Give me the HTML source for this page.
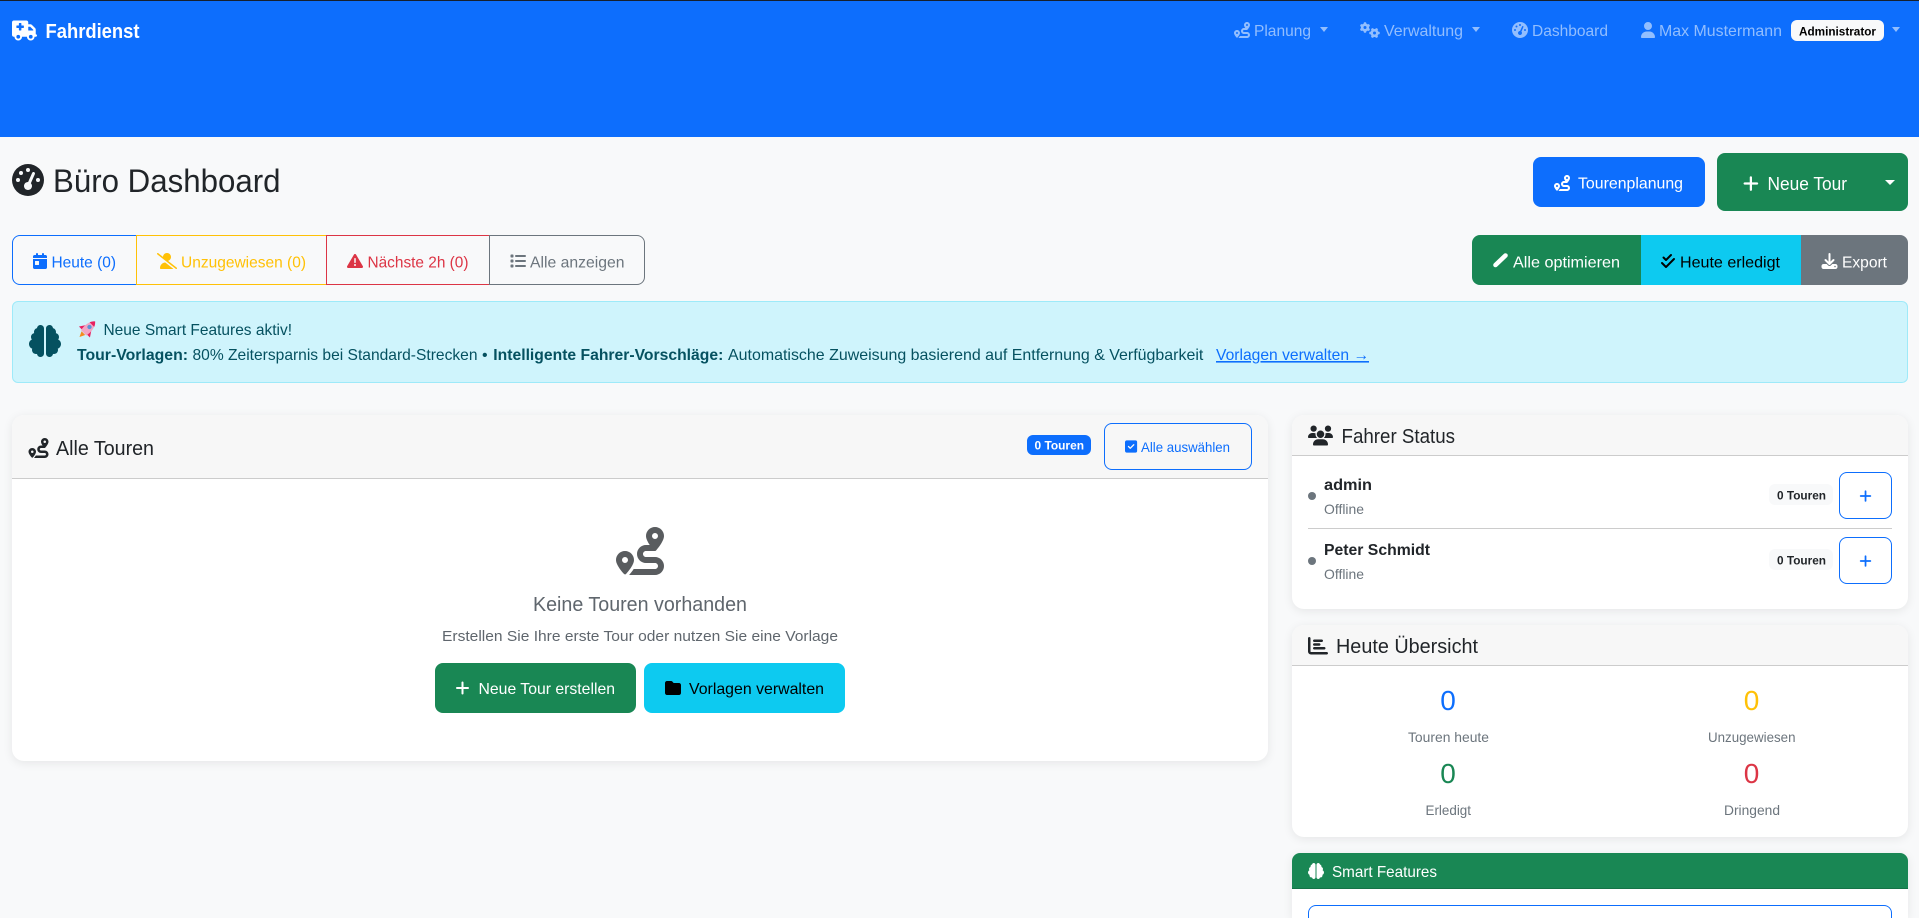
<!DOCTYPE html>
<html lang="de">
<head>
<meta charset="utf-8">
<title>Fahrdienst - Büro Dashboard</title>
<style>
html,body{margin:0;padding:0;width:1919px;height:918px;overflow:hidden;background:#f8f9fa;font-family:"Liberation Sans",sans-serif}
body{position:relative}
.b{position:absolute;box-sizing:border-box}
.card{background:#fff;border-radius:12px;box-shadow:0 2px 10px rgba(0,0,0,.08);overflow:hidden}
.hd{position:absolute;left:0;right:0;top:0;background:#f7f7f7;border-bottom:1px solid #ccc;box-sizing:border-box}
svg.o{position:absolute;left:0;top:0}
svg.o text{font-family:"Liberation Sans",sans-serif;font-size:16px}
.bd{font-weight:700}
</style>
</head>
<body>
<nav class="b" style="left:0;top:0;width:1919px;height:137px;background:#0d6efd;border-top:1px solid #16202e"></nav>

<!-- top buttons -->
<div class="b" style="left:1533px;top:157px;width:172px;height:50px;background:#0d6efd;border-radius:8px"></div>
<div class="b" style="left:1717px;top:153px;width:191px;height:58px;background:#198754;border-radius:8px"></div>

<!-- filter group -->
<div class="b" style="left:12px;top:235px;width:125px;height:50px;border:1px solid #0d6efd;border-radius:8px 0 0 8px"></div>
<div class="b" style="left:136px;top:235px;width:191px;height:50px;border:1px solid #ffc107"></div>
<div class="b" style="left:326px;top:235px;width:164px;height:50px;border:1px solid #dc3545"></div>
<div class="b" style="left:489px;top:235px;width:156px;height:50px;border:1px solid #6c757d;border-radius:0 8px 8px 0"></div>

<!-- action group -->
<div class="b" style="left:1472px;top:235px;width:169px;height:50px;background:#198754;border-radius:8px 0 0 8px"></div>
<div class="b" style="left:1641px;top:235px;width:160px;height:50px;background:#0dcaf0"></div>
<div class="b" style="left:1801px;top:235px;width:107px;height:50px;background:#6c757d;border-radius:0 8px 8px 0"></div>

<!-- alert -->
<div class="b" style="left:12px;top:301px;width:1896px;height:82px;background:#cff4fc;border:1px solid #9eeaf9;border-radius:6px"></div>

<!-- tours card -->
<div class="b card" style="left:12px;top:415px;width:1256px;height:346px">
  <div class="hd" style="height:64px"></div>
</div>
<div class="b" style="left:1027px;top:435px;width:64px;height:20px;background:#0d6efd;border-radius:6px"></div>
<div class="b" style="left:1104px;top:423px;width:148px;height:47px;border:1px solid #0d6efd;border-radius:8px"></div>
<div class="b" style="left:435px;top:663px;width:201px;height:50px;background:#198754;border-radius:8px"></div>
<div class="b" style="left:644px;top:663px;width:201px;height:50px;background:#0dcaf0;border-radius:8px"></div>

<!-- driver card -->
<div class="b card" style="left:1292px;top:415px;width:616px;height:194px">
  <div class="hd" style="height:41px"></div>
</div>
<div class="b" style="left:1308px;top:492px;width:8px;height:8px;border-radius:50%;background:#6c757d"></div>
<div class="b" style="left:1308px;top:557px;width:8px;height:8px;border-radius:50%;background:#6c757d"></div>
<div class="b" style="left:1769px;top:484px;width:64px;height:21px;background:#f8f9fa;border-radius:6px"></div>
<div class="b" style="left:1769px;top:549px;width:64px;height:21px;background:#f8f9fa;border-radius:6px"></div>
<div class="b" style="left:1839px;top:472px;width:53px;height:47px;border:1px solid #0d6efd;border-radius:8px"></div>
<div class="b" style="left:1839px;top:537px;width:53px;height:47px;border:1px solid #0d6efd;border-radius:8px"></div>
<div class="b" style="left:1308px;top:528px;width:584px;height:1px;background:#ccc"></div>

<!-- today card -->
<div class="b card" style="left:1292px;top:625px;width:616px;height:212px">
  <div class="hd" style="height:41px"></div>
</div>

<!-- smart card -->
<div class="b card" style="left:1292px;top:853px;width:616px;height:65px;border-radius:8px 8px 0 0">
  <div class="hd" style="height:36px;background:#198754;border-bottom:1px solid #157347"></div>
</div>
<div class="b" style="left:1308px;top:905px;width:584px;height:13px;border:1px solid #0d6efd;border-bottom:0;border-radius:8px 8px 0 0"></div>

<svg class="o" width="1919" height="918" viewBox="0 0 1919 918" xmlns="http://www.w3.org/2000/svg">
  <!-- brand -->
  <svg x="12" y="20.5" width="25" height="20" viewBox="0 0 640 512" fill="#fff"><path d="M0 48C0 21.5 21.5 0 48 0H368c26.5 0 48 21.5 48 48V96h50.7c17 0 33.3 6.7 45.3 18.7L589.3 192c12 12 18.7 28.3 18.7 45.3V256v32 64c17.7 0 32 14.3 32 32s-14.3 32-32 32H576c0 53-43 96-96 96s-96-43-96-96H256c0 53-43 96-96 96s-96-43-96-96H48c-26.5 0-48-21.5-48-48V48zM416 256H544V237.3L466.7 160H416v96zM160 464a48 48 0 1 0 0-96 48 48 0 1 0 0 96zm368-48a48 48 0 1 0 -96 0 48 48 0 1 0 96 0zM176 80v48l-48 0c-8.8 0-16 7.2-16 16v32c0 8.8 7.2 16 16 16l48 0v48c0 8.8 7.2 16 16 16h32c8.8 0 16-7.2 16-16V192h48c8.8 0 16-7.2 16-16V144c0-8.8-7.2-16-16-16H240V80c0-8.8-7.2-16-16-16H192c-8.8 0-16 7.2-16 16z"/></svg>
  <text x="45.5" y="38" fill="#fff" class="bd" style="font-size:20px" textLength="94" lengthAdjust="spacingAndGlyphs">Fahrdienst</text>

  <!-- nav -->
  <g fill="#92befe">
    <svg x="1234" y="22" width="16" height="16" viewBox="0 0 512 512"><path d="M512 96c0 50.2-59.1 125.1-84.6 155c-3.8 4.4-9.4 6.1-14.5 5H320c-17.7 0-32 14.3-32 32s14.3 32 32 32h96c53 0 96 43 96 96s-43 96-96 96H139.6c8.7-9.9 19.3-22.6 30-36.8c6.3-8.4 12.8-17.6 19-27.2H416c17.7 0 32-14.3 32-32s-14.3-32-32-32H320c-53 0-96-43-96-96s43-96 96-96h39.8c-21-31.5-39.8-67.7-39.8-96c0-53 43-96 96-96s96 43 96 96zM117.1 489.1c-3.8 4.3-7.2 8.1-10.1 11.3l-1.8 2-.2-.2c-6 4.6-14.6 4-20-1.8C59.8 473 0 402.5 0 352c0-53 43-96 96-96s96 43 96 96c0 30-21.1 67-43.5 97.9c-10.7 14.7-21.7 28-30.8 38.5l-.6 .7zM128 352a32 32 0 1 0 -64 0 32 32 0 1 0 64 0zM416 128a32 32 0 1 0 0-64 32 32 0 1 0 0 64z"/></svg>
    <text x="1254" y="36" fill="#92befe" textLength="57" lengthAdjust="spacingAndGlyphs">Planung</text>
    <polygon points="1320,27 1328,27 1324,32"/>
    <svg x="1360" y="22" width="20" height="16" viewBox="0 0 640 512"><path d="M308.5 135.3c7.1-6.3 9.9-16.2 6.2-25c-2.3-5.3-4.8-10.5-7.6-15.5L304 89.4c-3-5-6.3-9.9-9.8-14.6c-5.7-7.6-15.7-10.1-24.7-7.1l-28.2 9.3c-10.7-8.8-23-16-36.2-20.9L199 27.1c-1.9-9.3-9.1-16.7-18.5-17.8C173.9 8.4 167.2 8 160.4 8h-.7c-6.8 0-13.5 .4-20.1 1.2c-9.4 1.1-16.6 8.6-18.5 17.8L115 56.1c-13.3 5-25.5 12.1-36.2 20.9L50.5 67.8c-9-3-19-.5-24.7 7.1c-3.5 4.7-6.8 9.6-9.9 14.6l-3 5.3c-2.8 5-5.3 10.2-7.6 15.6c-3.7 8.7-.9 18.6 6.2 25l22.2 19.8C32.6 161.9 32 168.9 32 176s.6 14.1 1.7 20.9L11.5 216.7c-7.1 6.3-9.9 16.2-6.2 25c2.3 5.3 4.8 10.5 7.6 15.6l3 5.2c3 5.1 6.3 9.9 9.9 14.6c5.7 7.6 15.7 10.1 24.7 7.1l28.2-9.3c10.7 8.8 23 16 36.2 20.9l6.1 29.1c1.9 9.3 9.1 16.7 18.5 17.8c6.7 .8 13.5 1.2 20.4 1.2s13.7-.4 20.4-1.2c9.4-1.1 16.6-8.6 18.5-17.8l6.1-29.1c13.3-5 25.5-12.1 36.2-20.9l28.2 9.3c9 3 19 .5 24.7-7.1c3.5-4.7 6.8-9.5 9.8-14.6l3.1-5.4c2.8-5 5.3-10.2 7.6-15.5c3.7-8.7 .9-18.6-6.2-25l-22.2-19.8c1.1-6.8 1.7-13.8 1.7-20.9s-.6-14.1-1.7-20.9l22.2-19.8zM112 176a48 48 0 1 1 96 0 48 48 0 1 1 -96 0zM504.7 500.5c6.3 7.1 16.2 9.9 25 6.2c5.3-2.3 10.5-4.8 15.5-7.6l5.4-3.1c5-3 9.9-6.3 14.6-9.8c7.6-5.7 10.1-15.7 7.1-24.7l-9.3-28.2c8.8-10.7 16-23 20.9-36.2l29.1-6.1c9.3-1.9 16.7-9.1 17.8-18.5c.8-6.7 1.2-13.5 1.2-20.4s-.4-13.7-1.2-20.4c-1.1-9.4-8.6-16.6-17.8-18.5L583.9 307c-5-13.3-12.1-25.5-20.9-36.2l9.3-28.2c3-9 .5-19-7.1-24.7c-4.7-3.5-9.6-6.8-14.6-9.9l-5.3-3c-5-2.8-10.2-5.3-15.6-7.6c-8.7-3.7-18.6-.9-25 6.2l-19.8 22.2c-6.8-1.1-13.8-1.7-20.9-1.7s-14.1 .6-20.9 1.7l-19.8-22.2c-6.3-7.1-16.2-9.9-25-6.2c-5.3 2.3-10.5 4.8-15.6 7.6l-5.2 3c-5.1 3-9.9 6.3-14.6 9.9c-7.6 5.7-10.1 15.7-7.1 24.7l9.3 28.2c-8.8 10.7-16 23-20.9 36.2L315.1 313c-9.3 1.9-16.7 9.1-17.8 18.5c-.8 6.7-1.2 13.5-1.2 20.4s.4 13.7 1.2 20.4c1.1 9.4 8.6 16.6 17.8 18.5l29.1 6.1c5 13.3 12.1 25.5 20.9 36.2l-9.3 28.2c-3 9-.5 19 7.1 24.7c4.7 3.5 9.5 6.8 14.6 9.8l5.4 3.1c5 2.8 10.2 5.3 15.5 7.6c8.7 3.7 18.6 .9 25-6.2l19.8-22.2c6.8 1.1 13.8 1.7 20.9 1.7s14.1-.6 20.9-1.7l19.8 22.2zM464 304a48 48 0 1 1 0 96 48 48 0 1 1 0-96z"/></svg>
    <text x="1384" y="36" fill="#92befe" textLength="79" lengthAdjust="spacingAndGlyphs">Verwaltung</text>
    <polygon points="1472,27 1480,27 1476,32"/>
    <svg x="1512" y="22" width="16" height="16" viewBox="0 0 512 512"><path d="M0 256a256 256 0 1 1 512 0A256 256 0 1 1 0 256zM288 96a32 32 0 1 0 -64 0 32 32 0 1 0 64 0zM256 416c35.3 0 64-28.7 64-64c0-17.4-6.9-33.1-18.1-44.6L366 161.7c5.3-12.1-.2-26.3-12.3-31.6s-26.3 .2-31.6 12.3L257.9 288c-.6 0-1.3 0-1.9 0c-35.3 0-64 28.7-64 64s28.7 64 64 64zM176 144a32 32 0 1 0 -64 0 32 32 0 1 0 64 0zM96 288a32 32 0 1 0 0-64 32 32 0 1 0 0 64zm352-32a32 32 0 1 0 -64 0 32 32 0 1 0 64 0z"/></svg>
    <text x="1532" y="36" fill="#92befe" textLength="76" lengthAdjust="spacingAndGlyphs">Dashboard</text>
    <svg x="1641" y="22" width="14" height="16" viewBox="0 0 448 512"><path d="M224 256A128 128 0 1 0 224 0a128 128 0 1 0 0 256zm-45.7 48C79.8 304 0 383.8 0 482.3C0 498.7 13.3 512 29.7 512H418.3c16.4 0 29.7-13.3 29.7-29.7C448 383.8 368.2 304 269.7 304H178.3z"/></svg>
    <text x="1659" y="36" fill="#92befe" textLength="123" lengthAdjust="spacingAndGlyphs">Max Mustermann</text>
    <polygon points="1892,27 1900,27 1896,32"/>
  </g>
  <rect x="1791" y="20" width="93" height="21" rx="6" fill="#f8f9fa"/>
  <text x="1799" y="35.5" fill="#000" class="bd" style="font-size:12px" textLength="77" lengthAdjust="spacingAndGlyphs">Administrator</text>

  <!-- heading -->
  <svg x="12" y="164" width="32" height="32" viewBox="0 0 512 512" fill="#212529"><path d="M0 256a256 256 0 1 1 512 0A256 256 0 1 1 0 256zM288 96a32 32 0 1 0 -64 0 32 32 0 1 0 64 0zM256 416c35.3 0 64-28.7 64-64c0-17.4-6.9-33.1-18.1-44.6L366 161.7c5.3-12.1-.2-26.3-12.3-31.6s-26.3 .2-31.6 12.3L257.9 288c-.6 0-1.3 0-1.9 0c-35.3 0-64 28.7-64 64s28.7 64 64 64zM176 144a32 32 0 1 0 -64 0 32 32 0 1 0 64 0zM96 288a32 32 0 1 0 0-64 32 32 0 1 0 0 64zm352-32a32 32 0 1 0 -64 0 32 32 0 1 0 64 0z"/></svg>
  <text x="53" y="192" fill="#212529" style="font-size:32px" textLength="227.5" lengthAdjust="spacingAndGlyphs">Büro Dashboard</text>

  <!-- top buttons content -->
  <svg x="1554" y="175" width="16" height="16" viewBox="0 0 512 512" fill="#fff"><path d="M512 96c0 50.2-59.1 125.1-84.6 155c-3.8 4.4-9.4 6.1-14.5 5H320c-17.7 0-32 14.3-32 32s14.3 32 32 32h96c53 0 96 43 96 96s-43 96-96 96H139.6c8.7-9.9 19.3-22.6 30-36.8c6.3-8.4 12.8-17.6 19-27.2H416c17.7 0 32-14.3 32-32s-14.3-32-32-32H320c-53 0-96-43-96-96s43-96 96-96h39.8c-21-31.5-39.8-67.7-39.8-96c0-53 43-96 96-96s96 43 96 96zM117.1 489.1c-3.8 4.3-7.2 8.1-10.1 11.3l-1.8 2-.2-.2c-6 4.6-14.6 4-20-1.8C59.8 473 0 402.5 0 352c0-53 43-96 96-96s96 43 96 96c0 30-21.1 67-43.5 97.9c-10.7 14.7-21.7 28-30.8 38.5l-.6 .7zM128 352a32 32 0 1 0 -64 0 32 32 0 1 0 64 0zM416 128a32 32 0 1 0 0-64 32 32 0 1 0 0 64z"/></svg>
  <text x="1578" y="188.5" fill="#fff" textLength="105" lengthAdjust="spacingAndGlyphs">Tourenplanung</text>
  <svg x="1743" y="174.5" width="15.75" height="18" viewBox="0 0 448 512" fill="#fff"><path d="M256 80c0-17.7-14.3-32-32-32s-32 14.3-32 32V224H48c-17.7 0-32 14.3-32 32s14.3 32 32 32H192V432c0 17.7 14.3 32 32 32s32-14.3 32-32V288H400c17.7 0 32-14.3 32-32s-14.3-32-32-32H256V80z"/></svg>
  <text x="1767.5" y="190" fill="#fff" style="font-size:18px" textLength="79.5" lengthAdjust="spacingAndGlyphs">Neue Tour</text>
  <polygon points="1885,180 1895,180 1890,185" fill="#fff"/>

  <!-- filters -->
  <svg x="33" y="253" width="14" height="16" viewBox="0 0 448 512" fill="#0d6efd"><path d="M128 0c17.7 0 32 14.3 32 32V64H288V32c0-17.7 14.3-32 32-32s32 14.3 32 32V64h48c26.5 0 48 21.5 48 48v48H0V112C0 85.5 21.5 64 48 64H96V32c0-17.7 14.3-32 32-32zM0 192H448V464c0 26.5-21.5 48-48 48H48c-26.5 0-48-21.5-48-48V192zm80 64c-8.8 0-16 7.2-16 16v96c0 8.8 7.2 16 16 16h96c8.8 0 16-7.2 16-16V272c0-8.8-7.2-16-16-16H80z"/></svg>
  <text x="51.5" y="267.5" fill="#0d6efd" textLength="64.5" lengthAdjust="spacingAndGlyphs">Heute (0)</text>
  <svg x="157" y="253" width="20" height="16" viewBox="0 0 640 512" fill="#ffc107"><path d="M38.8 5.1C28.4-3.1 13.3-1.2 5.1 9.2S-1.2 34.7 9.2 42.9l592 464c10.4 8.2 25.5 6.3 33.7-4.1s6.3-25.5-4.1-33.7L353.3 251.6C407.9 237 448 187.2 448 128C448 57.3 390.7 0 320 0C250.2 0 193.5 55.8 192 125.2L38.8 5.1zM264.3 304.3C170.5 309.4 96 387.2 96 482.3c0 16.4 13.3 29.7 29.7 29.7H514.3c3.9 0 7.6-.7 11-2.1l-261-205.6z"/></svg>
  <text x="181" y="267.5" fill="#ffc107" textLength="125" lengthAdjust="spacingAndGlyphs">Unzugewiesen (0)</text>
  <svg x="347" y="253" width="16" height="16" viewBox="0 0 512 512" fill="#dc3545"><path d="M256 32c14.2 0 27.3 7.5 34.5 19.8l216 368c7.3 12.4 7.3 27.7 .2 40.1S486.3 480 472 480H40c-14.3 0-27.6-7.7-34.7-20.1s-7-27.8 .2-40.1l216-368C228.7 39.5 241.8 32 256 32zm0 128c-13.3 0-24 10.7-24 24V296c0 13.3 10.7 24 24 24s24-10.7 24-24V184c0-13.3-10.7-24-24-24zm32 224a32 32 0 1 0 -64 0 32 32 0 1 0 64 0z"/></svg>
  <text x="367.5" y="267.5" fill="#dc3545" textLength="101" lengthAdjust="spacingAndGlyphs">Nächste 2h (0)</text>
  <svg x="510" y="253" width="16" height="16" viewBox="0 0 512 512" fill="#6c757d"><path d="M40 48C26.7 48 16 58.7 16 72v48c0 13.3 10.7 24 24 24H88c13.3 0 24-10.7 24-24V72c0-13.3-10.7-24-24-24H40zM192 64c-17.7 0-32 14.3-32 32s14.3 32 32 32H480c17.7 0 32-14.3 32-32s-14.3-32-32-32H192zm0 160c-17.7 0-32 14.3-32 32s14.3 32 32 32H480c17.7 0 32-14.3 32-32s-14.3-32-32-32H192zm0 160c-17.7 0-32 14.3-32 32s14.3 32 32 32H480c17.7 0 32-14.3 32-32s-14.3-32-32-32H192zM16 232v48c0 13.3 10.7 24 24 24H88c13.3 0 24-10.7 24-24V232c0-13.3-10.7-24-24-24H40c-13.3 0-24 10.7-24 24zM40 368c-13.3 0-24 10.7-24 24v48c0 13.3 10.7 24 24 24H88c13.3 0 24-10.7 24-24V392c0-13.3-10.7-24-24-24H40z"/></svg>
  <text x="530" y="267.5" fill="#6c757d" textLength="94.5" lengthAdjust="spacingAndGlyphs">Alle anzeigen</text>

  <!-- actions -->
  <line x1="1495.5" y1="265" x2="1505.5" y2="255.5" stroke="#fff" stroke-width="4.6" stroke-linecap="round"/>
  <text x="1513" y="267.5" fill="#fff" textLength="107" lengthAdjust="spacingAndGlyphs">Alle optimieren</text>
  <svg x="1660" y="253" width="16" height="16" viewBox="0 0 512 512" fill="#000"><path d="M374.6 86.6c12.5-12.5 12.5-32.8 0-45.3s-32.8-12.5-45.3 0L192 178.7l-57.4-57.4c-12.5-12.5-32.8-12.5-45.3 0s-12.5 32.8 0 45.3l80 80c12.5 12.5 32.8 12.5 45.3 0l160-160zm96 128c12.5-12.5 12.5-32.8 0-45.3s-32.8-12.5-45.3 0L192 402.7 86.6 297.4c-12.5-12.5-32.8-12.5-45.3 0s-12.5 32.8 0 45.3l128 128c12.5 12.5 32.8 12.5 45.3 0l256-256z"/></svg>
  <text x="1680" y="267.5" fill="#000" textLength="100" lengthAdjust="spacingAndGlyphs">Heute erledigt</text>
  <svg x="1821.5" y="253" width="16" height="16" viewBox="0 0 512 512" fill="#fff"><path d="M288 32c0-17.7-14.3-32-32-32s-32 14.3-32 32V274.7l-73.4-73.4c-12.5-12.5-32.8-12.5-45.3 0s-12.5 32.8 0 45.3l128 128c12.5 12.5 32.8 12.5 45.3 0l128-128c12.5-12.5 12.5-32.8 0-45.3s-32.8-12.5-45.3 0L288 274.7V32zM64 352c-35.3 0-64 28.7-64 64v32c0 35.3 28.7 64 64 64H448c35.3 0 64-28.7 64-64V416c0-35.3-28.7-64-64-64H346.5l-45.3 45.3c-25 25-65.5 25-90.5 0L165.5 352H64zm368 56a24 24 0 1 1 0 48 24 24 0 1 1 0-48z"/></svg>
  <text x="1842" y="267.5" fill="#fff" textLength="45" lengthAdjust="spacingAndGlyphs">Export</text>

  <!-- alert content -->
  <svg x="29" y="325" width="32" height="32" viewBox="0 0 512 512" fill="#055160"><path d="M184 0c30.9 0 56 25.1 56 56V456c0 30.9-25.1 56-56 56c-28.9 0-52.7-21.9-55.7-50.1c-5.2 1.4-10.7 2.1-16.3 2.1c-35.3 0-64-28.7-64-64c0-7.4 1.3-14.6 3.6-21.2C21.4 367.4 0 338.2 0 304c0-31.9 18.7-59.5 45.8-72.3C37.1 220.8 32 207 32 192c0-30.7 21.6-56.3 50.4-62.6C80.8 123.9 80 118 80 112c0-29.9 20.6-55.1 48.3-62.1C131.3 21.9 155.1 0 184 0zM328 0c28.9 0 52.6 21.9 55.7 49.9c27.8 7 48.3 32.1 48.3 62.1c0 6-.8 11.9-2.4 17.4c28.8 6.2 50.4 31.9 50.4 62.6c0 15-5.1 28.8-13.8 39.7C493.3 244.5 512 272.1 512 304c0 34.2-21.4 63.4-51.6 74.8c2.3 6.6 3.6 13.8 3.6 21.2c0 35.3-28.7 64-64 64c-5.6 0-11.1-.7-16.3-2.1c-3 28.2-26.8 50.1-55.7 50.1c-30.9 0-56-25.1-56-56V56c0-30.9 25.1-56 56-56z"/></svg>
  <!-- rocket -->
  <g transform="translate(87.5 329) rotate(45) scale(1.08)">
    <path d="M-3.5 -1.5 L-7.2 4 L-3.2 4 Z M3.5 -1.5 L7.2 4 L3.2 4 Z" fill="#e8205f"/>
    <path d="M0 -10 C3.8 -6.4 4.6 -1 3.5 5 L-3.5 5 C-4.6 -1 -3.8 -6.4 0 -10Z" fill="#f2a6c4"/>
    <path d="M0 -10 C1.5 -8.6 2.4 -7.3 3 -5.8 L-3 -5.8 C-2.4 -7.3 -1.5 -8.6 0 -10Z" fill="#e8205f"/>
    <circle cx="0" cy="-2.6" r="2" fill="#5b93d6"/>
    <path d="M-2.4 5.4 L2.4 5.4 L0 10.5 Z" fill="#f58a1f"/>
  </g>
  <text x="103.5" y="335" fill="#055160" textLength="188.5" lengthAdjust="spacingAndGlyphs">Neue Smart Features aktiv!</text>
  <text x="77" y="360" fill="#055160" class="bd" textLength="111" lengthAdjust="spacingAndGlyphs">Tour-Vorlagen:</text>
  <text x="192.5" y="360" fill="#055160" textLength="285" lengthAdjust="spacingAndGlyphs">80% Zeitersparnis bei Standard-Strecken</text>
  <text x="482" y="360" fill="#055160">•</text>
  <text x="493.3" y="360" fill="#055160" class="bd" textLength="230" lengthAdjust="spacingAndGlyphs">Intelligente Fahrer-Vorschläge:</text>
  <text x="728" y="360" fill="#055160" textLength="475.3" lengthAdjust="spacingAndGlyphs">Automatische Zuweisung basierend auf Entfernung &amp; Verfügbarkeit</text>
  <text x="1216" y="360" fill="#0d6efd" text-decoration="underline" textLength="153" lengthAdjust="spacingAndGlyphs">Vorlagen verwalten →</text>

  <!-- tours card -->
  <svg x="28.5" y="438" width="20" height="20" viewBox="0 0 512 512" fill="#212529"><path d="M512 96c0 50.2-59.1 125.1-84.6 155c-3.8 4.4-9.4 6.1-14.5 5H320c-17.7 0-32 14.3-32 32s14.3 32 32 32h96c53 0 96 43 96 96s-43 96-96 96H139.6c8.7-9.9 19.3-22.6 30-36.8c6.3-8.4 12.8-17.6 19-27.2H416c17.7 0 32-14.3 32-32s-14.3-32-32-32H320c-53 0-96-43-96-96s43-96 96-96h39.8c-21-31.5-39.8-67.7-39.8-96c0-53 43-96 96-96s96 43 96 96zM117.1 489.1c-3.8 4.3-7.2 8.1-10.1 11.3l-1.8 2-.2-.2c-6 4.6-14.6 4-20-1.8C59.8 473 0 402.5 0 352c0-53 43-96 96-96s96 43 96 96c0 30-21.1 67-43.5 97.9c-10.7 14.7-21.7 28-30.8 38.5l-.6 .7zM128 352a32 32 0 1 0 -64 0 32 32 0 1 0 64 0zM416 128a32 32 0 1 0 0-64 32 32 0 1 0 0 64z"/></svg>
  <text x="56" y="455" fill="#212529" style="font-size:20px" textLength="98" lengthAdjust="spacingAndGlyphs">Alle Touren</text>
  <text x="1034.5" y="449.5" fill="#fff" class="bd" style="font-size:12px" textLength="49.5" lengthAdjust="spacingAndGlyphs">0 Touren</text>
  <svg x="1125" y="439.5" width="12.25" height="14" viewBox="0 0 448 512" fill="#0d6efd"><path d="M64 32C28.7 32 0 60.7 0 96V416c0 35.3 28.7 64 64 64H384c35.3 0 64-28.7 64-64V96c0-35.3-28.7-64-64-64H64zM337 209L209 337c-9.4 9.4-24.6 9.4-33.9 0l-64-64c-9.4-9.4-9.4-24.6 0-33.9s24.6-9.4 33.9 0l47 47L303 175c9.4-9.4 24.6-9.4 33.9 0s9.4 24.6 0 33.9z"/></svg>
  <text x="1141" y="452" fill="#0d6efd" style="font-size:14px" textLength="89" lengthAdjust="spacingAndGlyphs">Alle auswählen</text>

  <svg x="616" y="527" width="48" height="48" viewBox="0 0 512 512" fill="#595c5f"><path d="M512 96c0 50.2-59.1 125.1-84.6 155c-3.8 4.4-9.4 6.1-14.5 5H320c-17.7 0-32 14.3-32 32s14.3 32 32 32h96c53 0 96 43 96 96s-43 96-96 96H139.6c8.7-9.9 19.3-22.6 30-36.8c6.3-8.4 12.8-17.6 19-27.2H416c17.7 0 32-14.3 32-32s-14.3-32-32-32H320c-53 0-96-43-96-96s43-96 96-96h39.8c-21-31.5-39.8-67.7-39.8-96c0-53 43-96 96-96s96 43 96 96zM117.1 489.1c-3.8 4.3-7.2 8.1-10.1 11.3l-1.8 2-.2-.2c-6 4.6-14.6 4-20-1.8C59.8 473 0 402.5 0 352c0-53 43-96 96-96s96 43 96 96c0 30-21.1 67-43.5 97.9c-10.7 14.7-21.7 28-30.8 38.5l-.6 .7zM128 352a32 32 0 1 0 -64 0 32 32 0 1 0 64 0zM416 128a32 32 0 1 0 0-64 32 32 0 1 0 0 64z"/></svg>
  <text x="533" y="611" fill="#5f666d" style="font-size:20px" textLength="214" lengthAdjust="spacingAndGlyphs">Keine Touren vorhanden</text>
  <text x="442" y="641" fill="#5f666d" style="font-size:15px" textLength="396" lengthAdjust="spacingAndGlyphs">Erstellen Sie Ihre erste Tour oder nutzen Sie eine Vorlage</text>
  <svg x="455.5" y="680" width="14" height="16" viewBox="0 0 448 512" fill="#fff"><path d="M256 80c0-17.7-14.3-32-32-32s-32 14.3-32 32V224H48c-17.7 0-32 14.3-32 32s14.3 32 32 32H192V432c0 17.7 14.3 32 32 32s32-14.3 32-32V288H400c17.7 0 32-14.3 32-32s-14.3-32-32-32H256V80z"/></svg>
  <text x="478.5" y="694" fill="#fff" textLength="136.5" lengthAdjust="spacingAndGlyphs">Neue Tour erstellen</text>
  <svg x="665" y="680" width="16" height="16" viewBox="0 0 512 512" fill="#000"><path d="M64 480H448c35.3 0 64-28.7 64-64V160c0-35.3-28.7-64-64-64H288c-10.1 0-19.6-4.7-25.6-12.8L243.2 57.6C231.1 41.5 212.1 32 192 32H64C28.7 32 0 60.7 0 96V416c0 35.3 28.7 64 64 64z"/></svg>
  <text x="689" y="694" fill="#000" textLength="135" lengthAdjust="spacingAndGlyphs">Vorlagen verwalten</text>

  <!-- driver card -->
  <svg x="1308" y="425.5" width="25" height="20" viewBox="0 0 640 512" fill="#212529"><path d="M144 0a80 80 0 1 1 0 160A80 80 0 1 1 144 0zM512 0a80 80 0 1 1 0 160A80 80 0 1 1 512 0zM0 298.7C0 239.8 47.8 192 106.7 192h42.7c15.9 0 31 3.5 44.6 9.7c-1.3 7.2-1.9 14.7-1.9 22.3c0 38.2 16.8 72.5 43.3 96c-.2 0-.4 0-.7 0H21.3C9.6 320 0 310.4 0 298.7zM405.3 320c-.2 0-.4 0-.7 0c26.6-23.5 43.3-57.8 43.3-96c0-7.6-.7-15-1.9-22.3c13.6-6.3 28.7-9.7 44.6-9.7h42.7C592.2 192 640 239.8 640 298.7c0 11.8-9.6 21.3-21.3 21.3H405.3zM224 224a96 96 0 1 1 192 0 96 96 0 1 1 -192 0zM128 485.3C128 411.7 187.7 352 261.3 352H378.7C452.3 352 512 411.7 512 485.3c0 14.7-11.9 26.7-26.7 26.7H154.7c-14.7 0-26.7-11.9-26.7-26.7z"/></svg>
  <text x="1341.5" y="443" fill="#212529" style="font-size:20px" textLength="113.5" lengthAdjust="spacingAndGlyphs">Fahrer Status</text>
  <text x="1324" y="490" fill="#212529" class="bd" textLength="48" lengthAdjust="spacingAndGlyphs">admin</text>
  <text x="1324" y="514" fill="#6c757d" style="font-size:14px" textLength="40" lengthAdjust="spacingAndGlyphs">Offline</text>
  <text x="1777" y="499.5" fill="#212529" class="bd" style="font-size:12px" textLength="49" lengthAdjust="spacingAndGlyphs">0 Touren</text>
  <svg x="1859.4" y="489" width="12.25" height="14" viewBox="0 0 448 512" fill="#0d6efd"><path d="M256 80c0-17.7-14.3-32-32-32s-32 14.3-32 32V224H48c-17.7 0-32 14.3-32 32s14.3 32 32 32H192V432c0 17.7 14.3 32 32 32s32-14.3 32-32V288H400c17.7 0 32-14.3 32-32s-14.3-32-32-32H256V80z"/></svg>
  <text x="1324" y="555" fill="#212529" class="bd" textLength="106" lengthAdjust="spacingAndGlyphs">Peter Schmidt</text>
  <text x="1324" y="579" fill="#6c757d" style="font-size:14px" textLength="40" lengthAdjust="spacingAndGlyphs">Offline</text>
  <text x="1777" y="564.5" fill="#212529" class="bd" style="font-size:12px" textLength="49" lengthAdjust="spacingAndGlyphs">0 Touren</text>
  <svg x="1859.4" y="554" width="12.25" height="14" viewBox="0 0 448 512" fill="#0d6efd"><path d="M256 80c0-17.7-14.3-32-32-32s-32 14.3-32 32V224H48c-17.7 0-32 14.3-32 32s14.3 32 32 32H192V432c0 17.7 14.3 32 32 32s32-14.3 32-32V288H400c17.7 0 32-14.3 32-32s-14.3-32-32-32H256V80z"/></svg>

  <!-- today card -->
  <svg x="1308" y="635.7" width="20" height="20" viewBox="0 0 512 512" fill="#212529"><path d="M32 32c17.7 0 32 14.3 32 32V400c0 8.8 7.2 16 16 16H480c17.7 0 32 14.3 32 32s-14.3 32-32 32H80c-44.2 0-80-35.8-80-80V64C0 46.3 14.3 32 32 32zm96 96c0-17.7 14.3-32 32-32l192 0c17.7 0 32 14.3 32 32s-14.3 32-32 32l-192 0c-17.7 0-32-14.3-32-32zm32 64H288c17.7 0 32 14.3 32 32s-14.3 32-32 32H160c-17.7 0-32-14.3-32-32s14.3-32 32-32zm0 96H416c17.7 0 32 14.3 32 32s-14.3 32-32 32H160c-17.7 0-32-14.3-32-32s14.3-32 32-32z"/></svg>
  <text x="1336" y="653" fill="#212529" style="font-size:20px" textLength="142" lengthAdjust="spacingAndGlyphs">Heute Übersicht</text>
  <g text-anchor="middle">
    <text x="1448" y="710" fill="#0d6efd" style="font-size:28px">0</text>
    <text x="1751.5" y="710" fill="#ffc107" style="font-size:28px">0</text>
    <text x="1448" y="783" fill="#198754" style="font-size:28px">0</text>
    <text x="1751.5" y="783" fill="#dc3545" style="font-size:28px">0</text>
  </g>
  <text x="1408" y="742" fill="#6c757d" style="font-size:14px" textLength="81" lengthAdjust="spacingAndGlyphs">Touren heute</text>
  <text x="1708" y="742" fill="#6c757d" style="font-size:14px" textLength="87.5" lengthAdjust="spacingAndGlyphs">Unzugewiesen</text>
  <text x="1425.5" y="815" fill="#6c757d" style="font-size:14px" textLength="45.5" lengthAdjust="spacingAndGlyphs">Erledigt</text>
  <text x="1724" y="815" fill="#6c757d" style="font-size:14px" textLength="56" lengthAdjust="spacingAndGlyphs">Dringend</text>

  <!-- smart card -->
  <svg x="1308" y="863" width="16" height="16" viewBox="0 0 512 512" fill="#fff"><path d="M184 0c30.9 0 56 25.1 56 56V456c0 30.9-25.1 56-56 56c-28.9 0-52.7-21.9-55.7-50.1c-5.2 1.4-10.7 2.1-16.3 2.1c-35.3 0-64-28.7-64-64c0-7.4 1.3-14.6 3.6-21.2C21.4 367.4 0 338.2 0 304c0-31.9 18.7-59.5 45.8-72.3C37.1 220.8 32 207 32 192c0-30.7 21.6-56.3 50.4-62.6C80.8 123.9 80 118 80 112c0-29.9 20.6-55.1 48.3-62.1C131.3 21.9 155.1 0 184 0zM328 0c28.9 0 52.6 21.9 55.7 49.9c27.8 7 48.3 32.1 48.3 62.1c0 6-.8 11.9-2.4 17.4c28.8 6.2 50.4 31.9 50.4 62.6c0 15-5.1 28.8-13.8 39.7C493.3 244.5 512 272.1 512 304c0 34.2-21.4 63.4-51.6 74.8c2.3 6.6 3.6 13.8 3.6 21.2c0 35.3-28.7 64-64 64c-5.6 0-11.1-.7-16.3-2.1c-3 28.2-26.8 50.1-55.7 50.1c-30.9 0-56-25.1-56-56V56c0-30.9 25.1-56 56-56z"/></svg>
  <text x="1332" y="877" fill="#fff" textLength="105" lengthAdjust="spacingAndGlyphs">Smart Features</text>
</svg>
</body>
</html>
